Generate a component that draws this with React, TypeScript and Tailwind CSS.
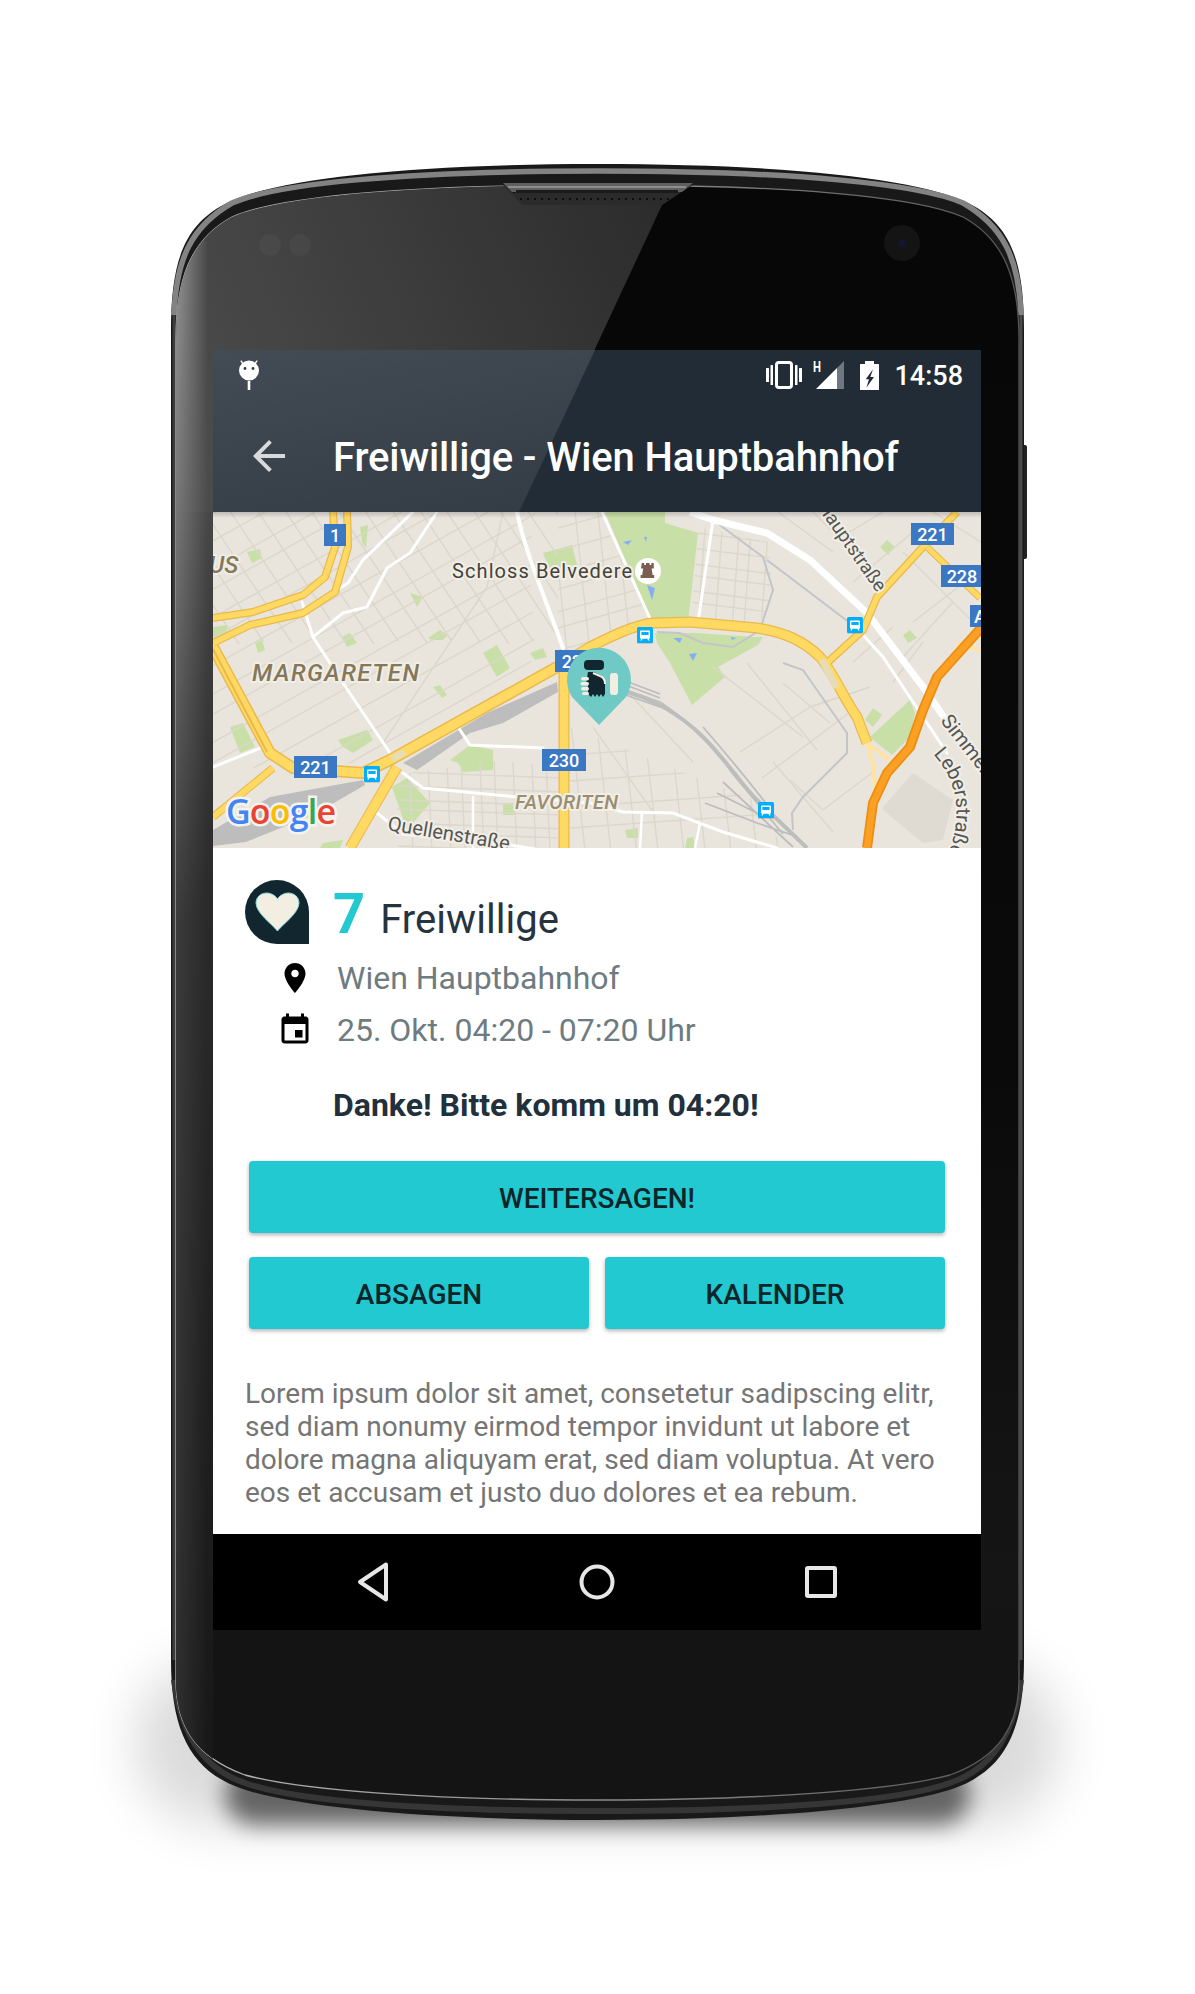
const family = (x0: number, y0: number, dx: number, dy: number, sx: number, sy: number, n: number) =>
  Array.from({ length: n }, (_, i) => {
    const jitter = ((i * 7) % 5) - 2;
    return `M${x0 + i * sx + jitter} ${y0 + i * sy + jitter}l${dx} ${dy}`;
  }).join("");

const parks = [
  "392,0 452,0 452,11 485,21 475,110 439,111",
  "442,121 484,121 540,125 550,125 545,133 505,155 512,165 479,193 457,151 444,131",
  "657,225 697,188 702,201 697,225 679,243 664,231",
  "652,208 660,196 669,203 660,215",
  "690,123 697,118 704,126 695,131",
  "667,35 674,28 682,35 675,43",
  "412,318 425,316 425,326 414,326",
  "474,326 480,325 482,336 472,336",
  "330,41 359,33 364,53 337,58",
  "270,141 284,133 297,156 284,165",
  "317,141 330,136 334,145 322,148",
  "220,175 227,173 234,183 229,186",
  "215,126 227,118 235,123 230,128 219,128",
  "197,81 210,85 204,95",
  "129,125 137,121 144,131 134,135",
  "42,131 49,128 52,138 45,141",
  "34,40 47,37 49,46 39,51",
  "0,115 14,113 14,123 0,126",
  "17,215 30,211 42,235 27,241",
  "147,15 155,13 153,36 149,30",
  "237,248 257,233 280,238 280,258 250,260 245,251",
  "179,275 194,266 217,291 194,318",
  "290,291 300,291 302,303 290,303",
  "125,228 154,218 160,228 140,241 130,235",
  "110,331 130,328 127,336 107,336",
];

const water = [
  "434,73 442,76 439,88",
  "410,30 419,28 415,33",
  "431,25 434,25 433,30",
  "460,126 469,126 467,131",
  "476,142 484,141 480,149",
  "518,125 523,126 519,128",
];

const sideStreets = [
  "M534 151L604 238M570 171L617 211M527 240L597 195M549 266L644 195M577 268L610 298M597 195L657 175",
  "M640 150L680 115M690 145L740 90M680 170L710 130M700 110L765 60M565 0L620 40M600 0L650 50M620 30L670 0",
  "M690 40L760 110M640 70L700 20M720 0L768 30M500 155L590 225M410 175L480 250M380 215L440 300",
  "M170 231L274 75M274 75L290 0M560 250L620 320M610 298L660 260",
];

const whiteRoads = [
  { d: "M304 0C312 40 330 80 350 136", w: 4 },
  { d: "M224 0L197 41L174 56L154 95L130 101L100 125", w: 3 },
  { d: "M200 0L150 48L135 71L124 78", w: 3 },
  { d: "M89 90L100 125L130 171L177 241", w: 3 },
  { d: "M0 255L50 235", w: 3 },
  { d: "M245 215L257 233L330 236", w: 3 },
  { d: "M190 261L210 276L304 285L377 291L410 300L460 301L510 320L564 336", w: 3 },
  { d: "M164 301L190 322L297 333L340 340", w: 3 },
  { d: "M260 285L260 336M429 300L427 336M487 311L482 336", w: 2.5 },
  { d: "M500 8L485 110", w: 3 },
  { d: "M389 0L439 111", w: 3 },
  { d: "M650 123L670 145L710 205L734 241", w: 3 },
];

function Phone() {
  const outer =
    "M171 330C171 262 184 225 225 204C270 180 400 164 597.5 164C795 164 925 180 970 204C1011 225 1024 262 1024 330L1024 1660C1024 1730 1005 1770 955 1788C905 1806 775 1820 597.5 1820C420 1820 290 1806 240 1788C190 1770 171 1730 171 1660Z";
  const face =
    "M176 340C176 280 190 240 232 217C280 196 410 185 597.5 185C785 185 915 196 963 217C1005 240 1019 280 1019 340L1019 1680C1019 1725 1000 1757 950 1775C895 1790 765 1800 597.5 1800C430 1800 300 1790 245 1775C195 1757 176 1725 176 1680Z";
  return (
    <svg viewBox="0 0 1195 1994" className="absolute inset-0 h-full w-full">
      <defs>
        <filter id="soft" x="-20%" y="-40%" width="140%" height="180%">
          <feGaussianBlur stdDeviation="11" />
        </filter>
        <filter id="softWide" x="-20%" y="-40%" width="140%" height="180%">
          <feGaussianBlur stdDeviation="26" />
        </filter>
        <linearGradient id="faceBase" x1="0" y1="0" x2="0" y2="1">
          <stop offset="0" stopColor="#070707" />
          <stop offset="0.55" stopColor="#0a0a0a" />
          <stop offset="0.85" stopColor="#151515" />
          <stop offset="1" stopColor="#141414" />
        </linearGradient>
        <linearGradient id="glass" gradientUnits="userSpaceOnUse" x1="200" y1="420" x2="680" y2="210">
          <stop offset="0" stopColor="#4b4b4b" />
          <stop offset="1" stopColor="#2b2b2b" />
        </linearGradient>
        <linearGradient id="leftStrip" x1="0" y1="0" x2="0" y2="1">
          <stop offset="0" stopColor="#474747" />
          <stop offset="0.3" stopColor="#2a2a2a" />
          <stop offset="1" stopColor="#171717" />
        </linearGradient>
        <linearGradient id="rimTone" x1="0" y1="0" x2="0" y2="1">
          <stop offset="0" stopColor="#9a9a9a" />
          <stop offset="0.18" stopColor="#7c7c7c" />
          <stop offset="0.45" stopColor="#3c3c3c" />
          <stop offset="1" stopColor="#2e2e2e" />
        </linearGradient>
        <linearGradient id="rimFade" x1="0" y1="0" x2="1" y2="0">
          <stop offset="0" stopColor="#fff" />
          <stop offset="1" stopColor="#000" />
        </linearGradient>
        <linearGradient id="faceLine" x1="0" y1="0" x2="1" y2="0">
          <stop offset="0" stopColor="#b5b5b5" />
          <stop offset="0.5" stopColor="#8d8d8d" />
          <stop offset="1" stopColor="#555" />
        </linearGradient>
        <mask id="rimMask">
          <rect x="176" y="180" width="32" height="1640" fill="url(#rimFade)" />
        </mask>
        <clipPath id="faceClip">
          <path d={face} />
        </clipPath>
        <pattern id="mesh" width="7" height="7" patternUnits="userSpaceOnUse">
          <rect width="7" height="7" fill="#2b2b2b" />
          <circle cx="3" cy="3" r="1.1" fill="#050505" />
        </pattern>
      </defs>

      <rect x="135" y="1660" width="925" height="165" rx="80" fill="#000" opacity="0.14" filter="url(#softWide)" />
      <rect x="225" y="1765" width="745" height="60" rx="30" fill="#000" opacity="0.55" filter="url(#soft)" />
      <rect x="1022" y="445" width="5" height="114" rx="2" fill="#222" />
      <path d={outer} fill="#191919" />
      <path
        d="M174 315C176 258 192 226 232 203C275 184 400 171 597.5 171C795 171 920 184 963 203C1003 226 1019 258 1021 315"
        fill="none"
        stroke="#838383"
        strokeWidth="5.5"
      />
      <path d="M174 315L174 1660" stroke="#3d3d3d" strokeWidth="3" />
      <path d="M1021 315L1021 1660" stroke="#4a4a4a" strokeWidth="3" />
      <path
        d="M174 1680C182 1745 212 1772 245 1783C295 1801 420 1811 597.5 1811C775 1811 900 1801 950 1783C983 1772 1013 1745 1021 1680"
        fill="none"
        stroke="#363636"
        strokeWidth="6"
      />
      <path d={face} fill="url(#faceBase)" stroke="url(#faceLine)" strokeWidth="1.3" />
      <g clipPath="url(#faceClip)">
        <polygon points="170,180 695,180 662,205 519,512 170,512" fill="url(#glass)" />
        <rect x="176" y="512" width="37" height="1290" fill="url(#leftStrip)" />
        <rect x="176" y="180" width="32" height="1640" fill="url(#rimTone)" mask="url(#rimMask)" />
      </g>

      <polygon points="503,185 693,185 680,193 662,205 522,205" fill="url(#mesh)" />
      <polygon points="503,183 693,183 682,192 512,192" fill="#5f5f5f" />
      <rect x="508" y="186" width="178" height="2" fill="#8d8d8d" />
      <rect x="516" y="190" width="162" height="3" fill="#1b1b1b" />

      <circle cx="270" cy="245" r="11" fill="#fff" opacity="0.035" />
      <circle cx="300" cy="245" r="11" fill="#fff" opacity="0.035" />
      <circle cx="902" cy="243" r="18" fill="#141414" />
      <circle cx="902" cy="243" r="4" fill="#15152e" />
    </svg>
  );
}

function MapView() {
  const shield = "#3b78c4";
  const halo = { paintOrder: "stroke" as const, stroke: "#f1eee6", strokeWidth: 4, strokeLinejoin: "round" as const };
  return (
    <svg viewBox="0 0 768 336" className="block h-[336px] w-[768px] font-[family-name:Roboto,sans-serif]">
      <defs>
        <clipPath id="zoneLeft"><polygon points="0,0 345,0 345,155 177,248 80,256 0,256" /></clipPath>
        <clipPath id="zoneBottom"><polygon points="190,262 345,240 345,336 137,336" /></clipPath>
        <clipPath id="zoneSouth"><polygon points="357,215 545,290 570,336 357,336" /></clipPath>
        <clipPath id="zoneMid"><polygon points="345,0 392,0 439,111 345,155" /></clipPath>
        <clipPath id="zoneEast"><polygon points="485,15 555,30 560,80 545,116 478,110" /></clipPath>
        <linearGradient id="topShade" x1="0" y1="0" x2="0" y2="1">
          <stop offset="0" stopColor="#000" stopOpacity="0.18" />
          <stop offset="1" stopColor="#000" stopOpacity="0" />
        </linearGradient>
      </defs>
      <rect width="768" height="336" fill="#e9e5dd" />
      <polygon points="670,295 700,261 740,288 730,328 710,331 670,298" fill="#dfdbd3" />
      {parks.map((p) => (
        <polygon key={p} points={p} fill="#c9dfa8" />
      ))}
      {water.map((p) => (
        <polygon key={p} points={p} fill="#86aef5" />
      ))}

      <g fill="none" stroke="#dbd7ca" strokeWidth="1.4">
        <path clipPath="url(#zoneLeft)" d={family(-130, -20, 100, 150, 27, 0, 20)} />
        <path clipPath="url(#zoneLeft)" d={family(-20, 15, 340, -190, 0, 25, 16)} />
        <path clipPath="url(#zoneBottom)" d={family(198, 250, 4, 90, 17, 0, 10)} />
        <path clipPath="url(#zoneBottom)" d={family(185, 262, 165, 6, 0, 12, 7)} />
        <path clipPath="url(#zoneSouth)" d={family(360, 215, 14, 125, 24, 0, 9)} />
        <path clipPath="url(#zoneSouth)" d={family(357, 245, 200, -14, 0, 24, 4)} />
        <path clipPath="url(#zoneMid)" d={family(340, -10, 18, 170, 21, 0, 5)} />
        <path clipPath="url(#zoneMid)" d={family(340, 20, 100, -28, 0, 20, 7)} />
        <path clipPath="url(#zoneEast)" d={family(495, 5, -8, 110, 15, 0, 5)} />
        <path clipPath="url(#zoneEast)" d={family(478, 22, 80, 10, 0, 14, 7)} />
        {sideStreets.map((d) => (
          <path key={d} d={d} />
        ))}
      </g>

      <g fill="#bdbdbd">
        <polygon points="0,318 57,285 150,268 152,273 100,303 33,330 0,334" />
        <polygon points="190,251 274,201 344,170 345,180 290,211 257,221 204,258" />
      </g>
      <g fill="none" stroke="#bdbdbd" strokeWidth="1.8">
        <path d="M410 168L447 182M410 172L447 186M410 177L447 190M410 182L447 195" />
        <path d="M405 178C440 185 470 205 490 225C515 250 530 275 544 288L594 336" strokeWidth="4" />
        <path d="M447 190C480 212 505 240 520 262L570 322M490 215C510 238 530 262 552 290" />
        <path d="M492 291L544 311L585 325M504 281L552 305M510 270L580 335" />
      </g>
      <g fill="none" stroke="#c3c5ca" strokeWidth="2">
        <path d="M570 151L590 158L634 221L634 241L590 285L579 301L580 318" />
        <path d="M500 8L550 45L560 78L547 118L520 135L490 131L467 121L444 120" />
        <path d="M554 48L637 111" />
      </g>

      <g fill="none" stroke="#fff" strokeLinecap="round">
        {whiteRoads.map((r) => (
          <path key={r.d} d={r.d} strokeWidth={r.w} />
        ))}
        <path d="M477 0L500 8L554 21L597 48L654 101L710 175L768 258" strokeWidth="7" strokeLinecap="butt" />
      </g>

      <g fill="none" stroke="#ffe3a0" strokeWidth="4">
        <path d="M654 231L660 251L662 278M654 231L677 248M744 131L767 138M740 140L768 124" />
      </g>
      <g fill="none" strokeLinejoin="round" stroke="#e9b94c">
        <path d="M0 106L40 100L90 83L112 65L122 35L120 -2" strokeWidth="8" />
        <path d="M0 131L37 113L90 101L122 80L135 35L134 -2" strokeWidth="8" />
        <path d="M0 135L57 241L80 256L150 261L177 248L344 155" strokeWidth="12" />
        <path d="M344 155L377 135C395 126 420 113 440 111L477 110L544 116C570 120 590 128 607 145C620 160 630 185 644 205L654 231" strokeWidth="11" />
        <path d="M351 155L351 336" strokeWidth="11" />
        <path d="M60 256L0 305" strokeWidth="8" />
        <path d="M184 255L137 336" strokeWidth="11" />
        <path d="M614 151L650 118L664 85L710 35L744 0" strokeWidth="8" />
        <path d="M714 35L767 86" strokeWidth="7" />
      </g>
      <g fill="none" strokeLinejoin="round" stroke="#ffd962">
        <path d="M0 106L40 100L90 83L112 65L122 35L120 -2" strokeWidth="5.5" />
        <path d="M0 131L37 113L90 101L122 80L135 35L134 -2" strokeWidth="5.5" />
        <path d="M0 135L57 241L80 256L150 261L177 248L344 155" strokeWidth="9" />
        <path d="M344 155L377 135C395 126 420 113 440 111L477 110L544 116C570 120 590 128 607 145C620 160 630 185 644 205L654 231" strokeWidth="8.5" />
        <path d="M351 155L351 336" strokeWidth="8.5" />
        <path d="M60 256L0 305" strokeWidth="6" />
        <path d="M184 255L137 336" strokeWidth="9" />
        <path d="M614 151L650 118L664 85L710 35L744 0" strokeWidth="5.5" />
        <path d="M714 35L767 86" strokeWidth="5" />
      </g>
      <path d="M0 137L54 240" fill="none" stroke="#e9b94c" strokeWidth="2" />
      <path d="M179 247L192 240" stroke="#e7dcb6" strokeWidth="7" />
      <path d="M610 150L622 173" stroke="#e7dcb6" strokeWidth="7" strokeLinecap="round" />

      <path
        d="M654 336L660 291L674 261L697 235L710 198L724 165L768 116"
        fill="none"
        stroke="#ec8d14"
        strokeWidth="10"
        strokeLinejoin="round"
      />
      <path
        d="M654 336L660 291L674 261L697 235L710 198L724 165L768 116"
        fill="none"
        stroke="#fca024"
        strokeWidth="6.5"
        strokeLinejoin="round"
      />

      <text x="-4" y="61" fontSize="24" fontStyle="italic" fontWeight="500" fill="#85775a" style={halo}>US</text>
      <text x="39" y="169" fontSize="24" fontStyle="italic" fontWeight="500" fill="#85775a" textLength="167" style={halo}>MARGARETEN</text>
      <text x="302" y="297" fontSize="20" fontStyle="italic" fontWeight="500" fill="#9a8d72" textLength="103" style={halo}>FAVORITEN</text>
      <text x="239" y="66" fontSize="20" fill="#454239" textLength="180" style={halo}>Schloss Belvedere</text>
      <text transform="translate(174 318) rotate(9.5)" fontSize="20" fill="#555" style={halo}>Quellenstraße</text>
      <text transform="translate(664 81) rotate(55)" textAnchor="end" fontSize="19" fill="#555" style={halo}>Hauptstraße</text>
      <text transform="translate(727 209) rotate(52)" fontSize="20" fill="#555" style={halo}>Simmeringer</text>
      <path id="leberPath" d="M720 242Q760 285 732 350" fill="none" />
      <text fontSize="20" fill="#555" style={halo}>
        <textPath href="#leberPath">Leberstraße</textPath>
      </text>

      <circle cx="435" cy="59" r="13" fill="#fff" />
      <path d="M429 52h2.400v2h1.800v-2h3.600v2h1.800v-2h2.400v5.500h-2.200l1 6.500h1.600v3h-13.600v-3h1.600l1-6.500h-2.200z" fill="#7b5e50" transform="translate(-0.200 -1)" />

      <g fill={shield}>
        <rect x="111" y="12" width="22" height="22" />
        <rect x="81" y="244" width="43" height="22" />
        <rect x="329" y="237" width="44" height="22" />
        <rect x="342" y="138" width="44" height="22" />
        <rect x="698" y="11" width="43" height="22" />
        <rect x="728" y="53" width="40" height="22" />
        <rect x="757" y="93" width="11" height="22" />
      </g>
      <g fill="#fff" fontSize="18" fontWeight="500" textAnchor="middle">
        <text x="122" y="29.500">1</text>
        <text x="102.500" y="261.500">221</text>
        <text x="351" y="254.500">230</text>
        <text x="364" y="155.500">221</text>
        <text x="719.500" y="28.500">221</text>
        <text x="749" y="70.500">228</text>
        <text x="767" y="110.500">A</text>
      </g>

      {[
        [151, 254],
        [424, 115],
        [634, 105],
        [545, 290],
      ].map(([x, y]) => (
        <g key={x} transform={`translate(${x} ${y})`}>
          <rect x="0" y="1" width="16" height="16" rx="1.500" fill="#8a8a8a" opacity="0.35" />
          <rect width="16" height="16" rx="1.500" fill="#00aeff" />
          <path
            d="M4 3.500h8a1 1 0 0 1 1 1v6.200a1 1 0 0 1-1 1h-8a1 1 0 0 1-1-1v-6.200a1 1 0 0 1 1-1zM4.400 5v3h7.200v-3zM4.200 11.700l-.9 1.800h1.400l.9-1.800M11.800 11.700l.9 1.800h-1.400l-.9-1.800"
            fill="#fff"
            fillRule="evenodd"
          />
        </g>
      ))}

      <path d="M386 213L359 185A32 32 0 1 1 413 185Z" fill="#6fcac6" />
      <rect x="371" y="148" width="20" height="10" rx="4" fill="#12262f" />
      <path d="M375 160h6l6 3c3 1 5 4 5 8v11l-2 3-2-3-2 3-2-3-2 3-2-3-2 3-3-3v-10h-2z" fill="#12262f" />
      <path d="M380 161l7 3c3 1 5 4 5 8" fill="none" stroke="#f2efe2" strokeWidth="2" />
      <g fill="#f2efe2">
        <rect x="368" y="165" width="8" height="3.500" rx="1.700" />
        <rect x="367.500" y="170" width="8.500" height="3.500" rx="1.700" />
        <rect x="368" y="175" width="8" height="3.500" rx="1.700" />
        <rect x="369" y="180" width="7" height="3" rx="1.500" />
        <rect x="397" y="161" width="8" height="22" rx="3" />
      </g>

      <text x="13" y="312" fontFamily="Open Sans, sans-serif" fontSize="34" fontWeight="600" textLength="110" stroke="#f5f3ee" strokeWidth="5" style={{ paintOrder: "stroke" }}>
        <tspan fill="#4285f4">G</tspan>
        <tspan fill="#ea4335">o</tspan>
        <tspan fill="#fbbc05">o</tspan>
        <tspan fill="#4285f4">g</tspan>
        <tspan fill="#34a853">l</tspan>
        <tspan fill="#ea4335">e</tspan>
      </text>

      <rect width="768" height="6" fill="url(#topShade)" />
    </svg>
  );
}

function Header() {
  return (
    <div className="relative h-[162px] bg-[#222c36] text-white">
      <div className="absolute inset-0 bg-linear-to-br from-white/15 to-white/5 [clip-path:polygon(0_0,382px_0,306px_100%,0_100%)]" />
      <div className="relative flex h-[50px] items-center pl-[26px] pr-[18px]">
        <svg viewBox="0 0 20 30" className="h-[30px] w-5">
          <path d="M4 3.500L1.800 0.600M16 3.500L18.200 0.600" stroke="#fff" strokeWidth="1.400" />
          <circle cx="10" cy="10.500" r="10" fill="#fff" />
          <circle cx="6" cy="8.500" r="1.400" fill="#2f3a44" />
          <circle cx="14" cy="8.500" r="1.400" fill="#2f3a44" />
          <rect x="8.700" y="21" width="2.600" height="9" fill="#fff" />
        </svg>
        <div className="ml-auto flex items-center">
          <svg viewBox="0 0 36 28" className="h-7 w-9" fill="#fff">
            <rect x="10.500" y="1.500" width="15" height="25" rx="2.500" fill="none" stroke="#fff" strokeWidth="3" />
            <rect x="0" y="7" width="3" height="14" rx="0.500" />
            <rect x="4.500" y="4" width="2.500" height="20" rx="0.500" />
            <rect x="29" y="4" width="2.500" height="20" rx="0.500" />
            <rect x="33" y="7" width="3" height="14" rx="0.500" />
          </svg>
          <svg viewBox="0 0 32 28" className="ml-[11px] h-7 w-8">
            <polygon points="3,28 24,7 24,28" fill="#fff" />
            <polygon points="24,7 31,0 31,28 24,28" fill="#6f7780" />
            <text x="0" y="11" fontSize="14" fontWeight="700" fill="#fff" className="font-[family-name:Roboto,sans-serif]" textLength="8" lengthAdjust="spacingAndGlyphs">H</text>
          </svg>
          <svg viewBox="0 0 19 29" className="ml-[15px] h-[29px] w-[19px]">
            <rect x="5" y="0" width="9" height="4" fill="#fff" />
            <rect x="0" y="3" width="19" height="26" rx="0.500" fill="#fff" />
            <polygon points="13,8.300 5.700,18.300 9,18.300 6.300,26.700 14,16 10.300,16" fill="#222c36" />
          </svg>
          <span className="ml-[15px] pt-[3px] font-[family-name:Roboto,sans-serif] text-[27px] font-medium leading-none">14:58</span>
        </div>
      </div>
      <div className="relative flex h-[112px] items-center pt-[3px] pl-[32px]">
        <svg viewBox="0 0 24 24" className="-mt-[3px] h-12 w-12 opacity-80" fill="#fff">
          <path d="M20 11H7.830l5.590-5.590L12 4l-8 8 8 8 1.410-1.410L7.830 13H20v-2z" />
        </svg>
        <h1 className="ml-[40px] whitespace-nowrap font-[family-name:Roboto,sans-serif] text-[40px] font-medium leading-none tracking-[-0.13px]">
          Freiwillige - Wien Hauptbahnhof
        </h1>
      </div>
    </div>
  );
}

function ActionButton({ label, className }: { label: string; className: string }) {
  return (
    <button className={`${className} h-[72px] rounded-[4px] bg-[#22c9d1] pt-[3px] text-[28px] font-medium text-[#0b2529] shadow-[0_2px_4px_rgba(0,0,0,0.3)]`}>
      {label}
    </button>
  );
}

function Details() {
  return (
    <div className="h-[686px] bg-white font-[family-name:Roboto,sans-serif]">
      <div className="box-content flex h-16 items-baseline pl-[32px] pt-[32px]">
        <div className="flex h-16 w-16 flex-none items-center justify-center self-start rounded-full rounded-br-none bg-[#12262f]">
          <svg viewBox="0 0 45 40" className="h-10 w-[45px]">
            <path
              d="M22.500 39C17 32 1 21 1 11C1 5 6 1 11.500 1C16 1 20.500 3.500 22.500 7C24.500 3.500 29 1 33.500 1C39 1 44 5 44 11C44 21 28 32 22.500 39Z"
              fill="#f2efe2"
              stroke="#7fd4d4"
              strokeWidth="1"
            />
          </svg>
        </div>
        <span className="ml-[24px] text-[56px] font-bold leading-[68px] text-[#22c9d1]">7</span>
        <span className="ml-[15px] text-[40px] leading-[68px] tracking-[0.05px] text-[#263440]">Freiwillige</span>
      </div>

      <div className="mt-[8px] flex h-[52px] items-center pl-[64px] text-[32px] text-[#6e7b80]">
        <svg viewBox="0 0 24 24" className="h-9 w-9 flex-none">
          <path d="M12 2C8.130 2 5 5.130 5 9c0 5.250 7 13 7 13s7-7.750 7-13c0-3.870-3.130-7-7-7zm0 9.500c-1.380 0-2.500-1.120-2.500-2.500s1.120-2.500 2.500-2.500 2.500 1.120 2.500 2.500-1.120 2.500-2.500 2.500z" />
        </svg>
        <span className="ml-[24px] leading-[52px]">Wien Hauptbahnhof</span>
      </div>
      <div className="flex h-[52px] items-center pl-[64px] text-[32px] text-[#6e7b80]">
        <svg viewBox="0 0 24 24" className="h-9 w-9 flex-none">
          <path d="M17 12h-5v5h5v-5zM16 1v2H8V1H6v2H5c-1.110 0-1.990.900-1.990 2L3 19c0 1.100.890 2 2 2h14c1.100 0 2-.900 2-2V5c0-1.100-.900-2-2-2h-1V1h-2zm3 18H5V8h14v11z" />
        </svg>
        <span className="ml-[24px] leading-[52px]">25. Okt. 04:20 - 07:20 Uhr</span>
      </div>

      <p className="mt-[23px] pl-[120px] text-[32px] font-bold leading-[52px] text-[#22303c]">Danke! Bitte komm um 04:20!</p>

      <div className="mt-[30px] flex flex-col gap-6 pl-[36px] pr-[36px]">
        <ActionButton label="WEITERSAGEN!" className="w-full" />
        <div className="flex gap-4">
          <ActionButton label="ABSAGEN" className="flex-1" />
          <ActionButton label="KALENDER" className="flex-1" />
        </div>
      </div>

      <p className="mt-[48px] pl-[32px] text-[28px] leading-[33px] text-[#757575]">
        Lorem ipsum dolor sit amet, consetetur sadipscing elitr,
        <br />
        sed diam nonumy eirmod tempor invidunt ut labore et
        <br />
        dolore magna aliquyam erat, sed diam voluptua. At vero
        <br />
        eos et accusam et justo duo dolores et ea rebum.
      </p>
    </div>
  );
}

function NavBar() {
  return (
    <div className="flex h-24 items-center justify-center gap-[177px] bg-black">
      <svg viewBox="0 0 48 48" className="h-12 w-12" fill="none" stroke="#e8e8e8" strokeWidth="4" strokeLinejoin="round">
        <path d="M37 7L11 24.500L37 42Z" transform="translate(1 -0.500)" />
      </svg>
      <svg viewBox="0 0 48 48" className="h-12 w-12" fill="none" stroke="#e8e8e8" strokeWidth="4">
        <circle cx="24" cy="24" r="15.500" />
      </svg>
      <svg viewBox="0 0 48 48" className="h-12 w-12" fill="none" stroke="#e8e8e8" strokeWidth="4" strokeLinejoin="round">
        <rect x="9" y="10" width="28" height="28" rx="1" />
      </svg>
    </div>
  );
}

export default function App() {
  return (
    <div className="relative h-[1994px] w-[1195px] overflow-hidden bg-white">
      <Phone />
      <div className="relative pl-[213px] pt-[350px]">
        <div className="w-[768px]">
          <Header />
          <MapView />
          <Details />
          <NavBar />
        </div>
      </div>
    </div>
  );
}
